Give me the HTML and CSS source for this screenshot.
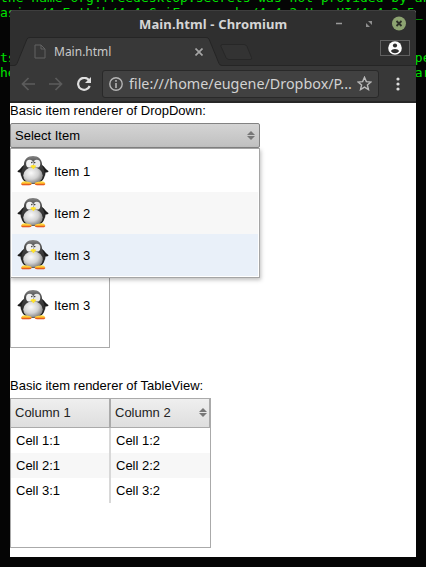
FILE: index.html
```html
<!DOCTYPE html>
<html lang="en">
<head>
<meta charset="utf-8">
<title>Main.html</title>
<link rel="stylesheet" href="styles.css">
</head>
<body>
<svg class="defs" width="0" height="0" aria-hidden="true">
  <defs>
    <radialGradient id="belly" cx=".4" cy=".35" r=".68"><stop offset="0" stop-color="#fafafa"/><stop offset=".55" stop-color="#d2d2d2"/><stop offset="1" stop-color="#7c7c7c"/></radialGradient>
    <linearGradient id="head" x1="0" y1="0" x2="0" y2="1"><stop offset="0" stop-color="#858585"/><stop offset=".25" stop-color="#4a4a4a"/><stop offset="1" stop-color="#141414"/></linearGradient>
    <linearGradient id="foot" x1="0" y1="0" x2="0" y2="1"><stop offset="0" stop-color="#ffef50"/><stop offset=".5" stop-color="#ffb92f"/><stop offset="1" stop-color="#d92d12"/></linearGradient>
    <symbol id="penguin" viewBox="0 0 32 32">
      <path d="M7 10C4 12 3.500 14.500 .3 16.300q1 1.500 3.200 1.300L4 21l4-3zM25 10c3 2 3.500 4.500 6.700 6.300q-1 1.500-3.200 1.300L28 21l-4-3z" fill="#1b1b1b"/>
      <path d="M16 1c5.500 0 8.700 3.300 9 8 .3 4.200 2.800 5 2.800 10.500 0 5.500-5 9.500-11.800 9.500S4.200 25 4.200 19.500C4.200 14 6.700 13.200 7 9c.3-4.700 3.500-8 9-8z" fill="url(#head)"/>
      <ellipse cx="16" cy="20.500" rx="9.800" ry="8.200" fill="url(#belly)"/>
      <ellipse cx="12.600" cy="8.700" rx="3.500" ry="3.900" fill="#f2f2f2"/>
      <ellipse cx="19.800" cy="8.700" rx="3.500" ry="3.900" fill="#e9e9e9"/>
      <circle cx="14.800" cy="7.600" r=".8" fill="#444"/><circle cx="17.700" cy="7.600" r=".8" fill="#444"/>
      <path d="M13.200 11q3-2 6.200 0l-3 3.300z" fill="#ffe22b"/>
      <path d="M4.200 28.200q.6-2 4-1.900l5 .9q2 .6 1.500 1.700-.4 1.300-2.700 1.300H6.500q-2.700 0-2.300-2zM28.200 28.200q-.6-2-4-1.900l-5 .9q-2 .6-1.500 1.700.4 1.300 2.700 1.300h5.500q2.700 0 2.300-2z" fill="url(#foot)"/>
    </symbol>
    <symbol id="sort" viewBox="0 0 8 9"><path d="M4 0l4 4H0zM0 5h8L4 9z" fill="#777"/></symbol>
  </defs>
</svg>
<div class="desktop">
  <pre class="term term-top">the name org.freedesktop.secrets was not provided by an
asics/4_ExtLib/4.4_GuiFrameworks/4.4.2_HaxeUI/4.4.2.5_</pre>
  <pre class="term term-mid">ts                                                   pe
he                                                   ar</pre>
  <main class="window">
    <header class="titlebar">
      <span class="window-title">Main.html - Chromium</span>
      <svg class="window-buttons" width="80" height="27" viewBox="0 0 80 27">
        <path d="M0 12.500h6" stroke="#9a9a9a" stroke-width="1.500"/>
        <path d="M32 10h4v4zM30 12v4h4z" fill="#8f8f8f"/>
        <circle cx="63" cy="12.500" r="7" fill="#8da371"/>
        <path d="M60.500 10l5 5M65.500 10l-5 5" stroke="#2c2f27" stroke-width="1.800"/>
      </svg>
    </header>
    <div class="tabstrip">
      <svg class="tab-shape" width="406" height="29" viewBox="0 0 406 29">
        <path d="M0 28.500H6L17 2q.5-1.500 3-1.500H196q2 0 3 1.500l11 26.500H406V29H0z" fill="#383838"/>
        <path d="M0 28.500H4q2 0 3-2L17 2q.5-1.500 3-1.500H196q2 0 3 1.500l10 24.500q1 2 3 2H406" fill="none" stroke="#252525"/>
        <path d="M212 7.500h22q2 0 3 2l4.500 11q.8 2-1.500 2h-21q-2 0-3-2l-5-11q-.5-2 1-2z" fill="#333" stroke="#272727"/>
      </svg>
      <svg class="page-icon" width="12" height="15" viewBox="0 0 12 15"><path d="M1 1h6l4 4v9H1zM7 1v4h4" fill="none" stroke="#626262"/></svg>
      <span class="tab-title">Main.html</span>
      <svg class="tab-close" width="8" height="8" viewBox="0 0 8 8"><path d="M.5 .5l7 7M7.500 .5l-7 7" stroke="#a5a5a5" stroke-width="1.700"/></svg>
      <span class="profile"><svg width="14" height="14" viewBox="0 0 14 14"><circle cx="7" cy="7" r="6.800" fill="#fff"/><circle cx="7" cy="4.500" r="2.100" fill="#303030"/><path d="M2.800 10q1.200-2 4.200-2t4.200 2q-1.500 2.200-4.200 2.200T2.800 10z" fill="#303030"/></svg></span>
    </div>
    <nav class="toolbar">
      <svg class="nav-icon" width="14" height="14" viewBox="0 0 14 14"><path d="M14 7H1.500M7.500 1L1.500 7l6 6" fill="none" stroke="#5c5c5c" stroke-width="1.700"/></svg>
      <svg class="nav-icon" width="14" height="14" viewBox="0 0 14 14"><path d="M0 7h12.500M6.500 1l6 6-6 6" fill="none" stroke="#5c5c5c" stroke-width="1.700"/></svg>
      <svg class="nav-icon" width="14" height="14" viewBox="0 0 14 14"><path d="M12 3.300A6 6 0 1 0 12.700 9" fill="none" stroke="#dedede" stroke-width="2.200"/><path d="M14 0v6H8z" fill="#dedede"/></svg>
      <div class="address">
        <svg class="info" width="14" height="14" viewBox="0 0 14 14"><circle cx="7" cy="7" r="6.200" fill="none" stroke="#b5b5b5" stroke-width="1.400"/><path d="M7 3v1.700M7 6v5" stroke="#b5b5b5" stroke-width="1.600"/></svg>
        <span class="url">file:///home/eugene/Dropbox/P...</span>
        <svg class="star" width="15" height="15" viewBox="0 0 14 14"><path d="M7 1.200l1.700 4 4.300.4-3.300 2.800 1 4.300L7 10.400l-3.700 2.300 1-4.300L1 5.600l4.300-.4z" fill="none" stroke="#b8b8b8" stroke-width="1.300"/></svg>
      </div>
      <svg class="menu-dots" width="4" height="14" viewBox="0 0 4 14"><g fill="#ddd"><circle cx="2" cy="2" r="1.600"/><circle cx="2" cy="7" r="1.600"/><circle cx="2" cy="12" r="1.600"/></g></svg>
    </nav>
    <section class="page">
      <p class="caption">Basic item renderer of DropDown:</p>
      <div class="dropdown">
        <span>Select Item</span>
        <svg width="8" height="9"><use href="#sort"/></svg>
        <ul class="popup">
          <li class="item"><svg class="penguin"><use href="#penguin"/></svg>Item 1</li>
          <li class="item even"><svg class="penguin"><use href="#penguin"/></svg>Item 2</li>
          <li class="item hover"><svg class="penguin"><use href="#penguin"/></svg>Item 3</li>
        </ul>
      </div>
      <ul class="list">
        <li class="item"><svg class="penguin"><use href="#penguin"/></svg>Item 3</li>
      </ul>
      <p class="caption table-caption">Basic item renderer of TableView:</p>
      <div class="table">
        <div class="row head"><span class="cell">Column 1</span><span class="cell">Column 2<svg width="8" height="9"><use href="#sort"/></svg></span></div>
        <div class="row"><span class="cell">Cell 1:1</span><span class="cell">Cell 1:2</span></div>
        <div class="row even"><span class="cell">Cell 2:1</span><span class="cell">Cell 2:2</span></div>
        <div class="row"><span class="cell">Cell 3:1</span><span class="cell">Cell 3:2</span></div>
      </div>
    </section>
  </main>
  <svg class="cursor" width="13" height="20" viewBox="0 0 13 20"><path d="M1 1v15l3.500-3 2.800 5.500 2.500-1.200-2.600-5.300H12z" fill="#111" stroke="#fff"/></svg>
</div>
</body>
</html>
```
FILE: styles.css
```css
* { box-sizing: border-box; }
body { margin: 0; font: 13px/15px "Liberation Sans", Arial, sans-serif; color: #000; }
.defs { position: absolute; }
svg { display: block; flex: none; }
p, ul, pre { margin: 0; padding: 0; list-style: none; }
.desktop { position: relative; width: 426px; height: 567px; overflow: hidden; background: #050505; padding: 10px; }
.term { position: absolute; left: 0; font: 13px/15px "DejaVu Sans Mono", monospace; color: #00e000; }
.term-top { top: -10px; }
.term-mid { top: 50px; }
.window { position: relative; width: 406px; height: 547px; display: flex; flex-direction: column; background: #fff; border-radius: 3px 3px 0 0; overflow: hidden; }
.titlebar { height: 27px; flex: none; display: flex; align-items: center; background: #2f2f2f; border-top: 1px solid #3e3e3e; }
.window-title { width: 326px; padding-left: 129px; font: bold 13px/20px "Noto Sans", sans-serif; letter-spacing: .13px; color: #d6d6d6; white-space: nowrap; }
.tabstrip { height: 29px; flex: none; position: relative; display: flex; align-items: center; background: #2f2f2f; font: 12px/18px "Noto Sans", sans-serif; color: #c9c9c9; }
.tab-shape { position: absolute; left: 0; top: 0; }
.page-icon { position: relative; margin-left: 24px; }
.tab-title { position: relative; margin-left: 8px; width: 141px; }
.tab-close { position: relative; }
.profile { position: relative; margin: -8px 6px 0 auto; width: 30px; height: 16px; border: 1px solid #606060; display: flex; align-items: center; justify-content: center; }
.toolbar { height: 37px; flex: none; display: flex; align-items: center; background: #383838; border-bottom: 2px solid #272727; padding-left: 11px; }
.nav-icon { margin-right: 14px; }
.address { flex: none; width: 277px; height: 28px; display: flex; align-items: center; padding: 0 6px; border: 1px solid #292929; border-radius: 3px; background: #414141; margin: 0 17px 0 -3px; }
.url { width: 230px; margin-left: 6px; font: 14.35px/20px "Noto Sans", sans-serif; color: #d2d2d2; white-space: nowrap; }
.page { flex: 1; background: #fff; }
.caption { height: 20px; }
.dropdown { position: relative; width: 250px; height: 25px; display: flex; align-items: center; justify-content: space-between; padding: 0 4px; border: 1px solid #828282; border-radius: 2px; background: linear-gradient(#d4d4d4, #c0c0c0); }
.popup { position: absolute; z-index: 1; left: -1px; top: 24px; width: 250px; height: 130px; padding: 1px; border: 1px solid #a5a5a5; background: #fff; box-shadow: 1px 2px 4px rgba(0,0,0,.25); }
.item { height: 42px; display: flex; align-items: center; padding-left: 5px; gap: 5px; }
.penguin { width: 32px; height: 32px; }
.even { background: #f7f7f7; }
.hover { background: #e9f0f9; }
.list { width: 100px; height: 200px; padding: 135px 1px 0; border: 1px solid #aaa; }
.table-caption { margin-top: 28px; height: 22px; padding-top: 2px; }
.table { width: 201px; height: 150px; border: 1px solid #aaa; }
.row { display: grid; grid-template-columns: 100px 99px; height: 25px; }
.cell { display: flex; align-items: center; padding-left: 5px; }
.cell:first-child { border-right: 2px solid #d8d8d8; }
.row.head { height: 29px; background: linear-gradient(#efefef, #dedede); border-bottom: 1px solid #aaa; color: #222; }
.head .cell { padding: 0 2px 1px 4px; justify-content: space-between; border-right: 1px solid #aaa; }
.head .cell:first-child { border-right: 2px solid #aaa; }
.cursor { position: absolute; left: 155px; top: 254px; filter: drop-shadow(1px 1px 1px rgba(0,0,0,.25)); }
```
